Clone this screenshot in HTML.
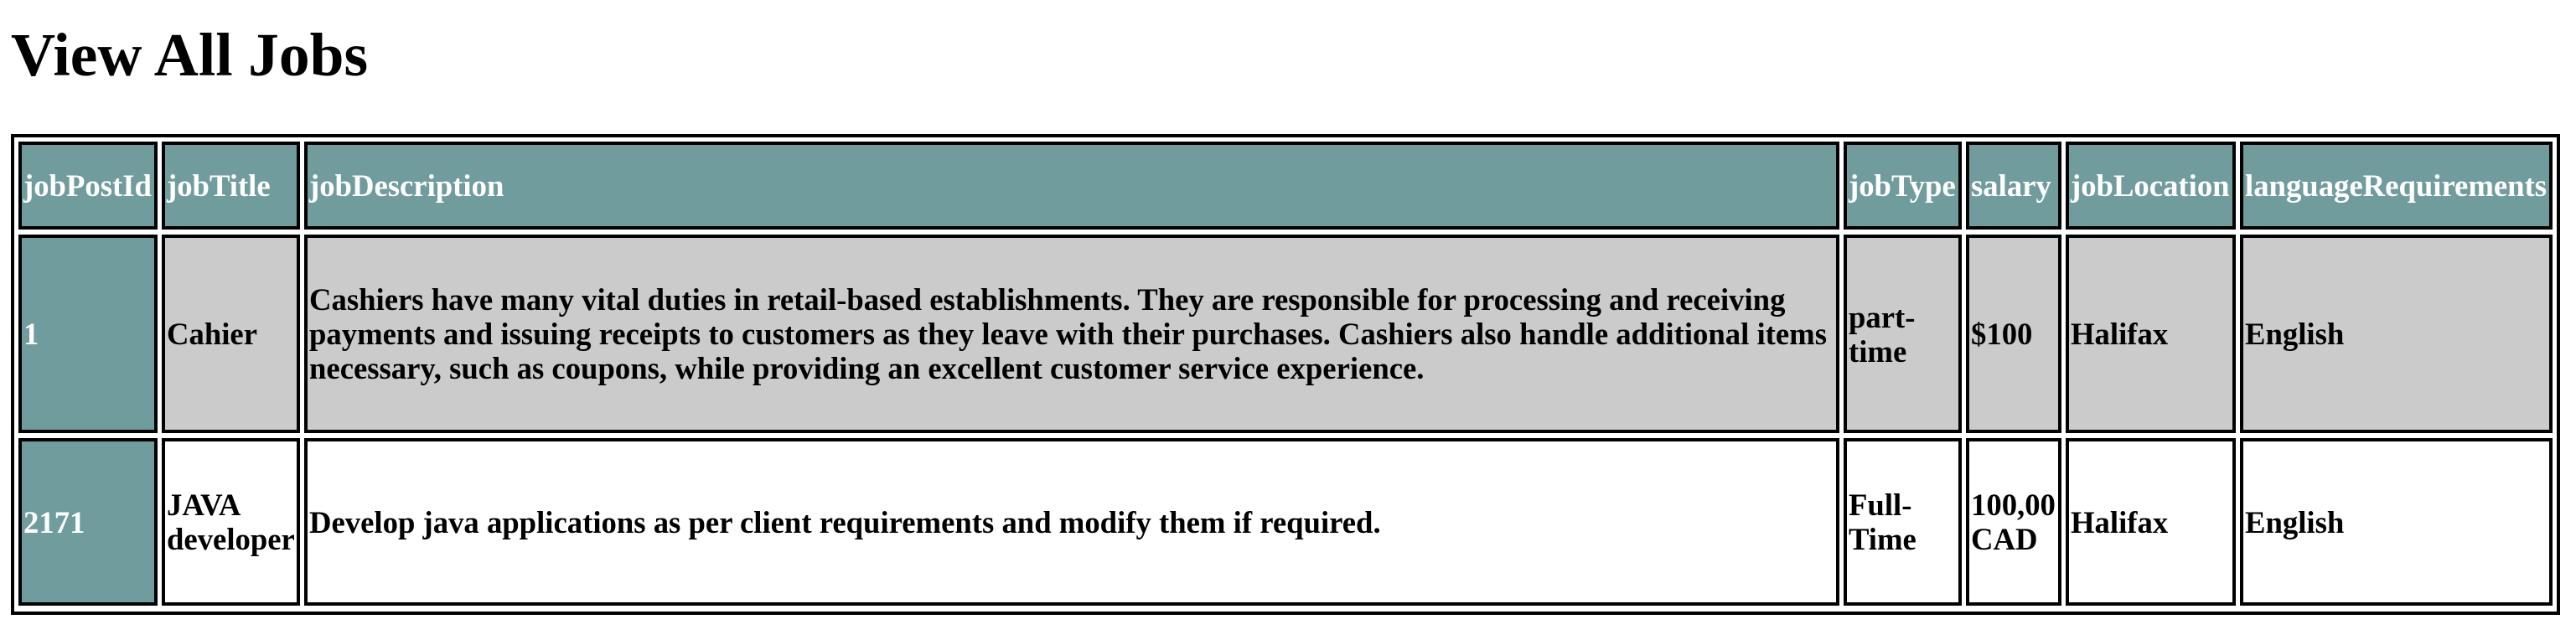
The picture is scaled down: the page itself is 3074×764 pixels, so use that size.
<!DOCTYPE html>
<html><head><meta charset="utf-8"><style>
html,body{margin:0;padding:0;background:#fff;width:3074px;height:764px;overflow:hidden;}
body{font-family:"Liberation Serif","Times New Roman",serif;font-weight:bold;position:relative;}
h1{position:absolute;left:13px;top:16px;margin:0;font-size:73.5px;line-height:100px;font-weight:bold;color:#000;}
.outer{position:absolute;left:13px;top:160px;width:3042px;height:574px;box-sizing:border-box;border:4px solid #000;}
.c{position:absolute;box-sizing:border-box;border:4px solid #000;display:flex;align-items:center;padding:0 2px;font-size:36.7px;line-height:41px;color:#000;white-space:nowrap;overflow:visible;}
.h,.t{background:#709c9e;color:#fff;}
.g{background:#cbcbcb;}
.w{background:#fff;}
</style></head><body>
<h1>View All Jobs</h1>
<div class="outer"></div>

<div class="c h" style="left:22px;top:169px;width:166px;height:105px">jobPostId</div>
<div class="c h" style="left:193px;top:169px;width:165px;height:105px">jobTitle</div>
<div class="c h" style="left:363px;top:169px;width:1832px;height:105px">jobDescription</div>
<div class="c h" style="left:2200px;top:169px;width:141px;height:105px">jobType</div>
<div class="c h" style="left:2346px;top:169px;width:114px;height:105px">salary</div>
<div class="c h" style="left:2465px;top:169px;width:203px;height:105px">jobLocation</div>
<div class="c h" style="left:2673px;top:169px;width:373px;height:105px">languageRequirements</div>

<div class="c t" style="left:22px;top:280px;width:166px;height:237px">1</div>
<div class="c g" style="left:193px;top:280px;width:165px;height:237px">Cahier</div>
<div class="c g" style="left:363px;top:280px;width:1832px;height:237px"><div>Cashiers have many vital duties in retail-based establishments. They are responsible for processing and receiving<br>payments and issuing receipts to customers as they leave with their purchases. Cashiers also handle additional items<br>necessary, such as coupons, while providing an excellent customer service experience.</div></div>
<div class="c g" style="left:2200px;top:280px;width:141px;height:237px"><div>part-<br>time</div></div>
<div class="c g" style="left:2346px;top:280px;width:114px;height:237px">$100</div>
<div class="c g" style="left:2465px;top:280px;width:203px;height:237px">Halifax</div>
<div class="c g" style="left:2673px;top:280px;width:373px;height:237px">English</div>

<div class="c t" style="left:22px;top:523px;width:166px;height:200px">2171</div>
<div class="c w" style="left:193px;top:523px;width:165px;height:200px"><div>JAVA<br>developer</div></div>
<div class="c w" style="left:363px;top:523px;width:1832px;height:200px">Develop java applications as per client requirements and modify them if required.</div>
<div class="c w" style="left:2200px;top:523px;width:141px;height:200px"><div>Full-<br>Time</div></div>
<div class="c w" style="left:2346px;top:523px;width:114px;height:200px"><div>100,00<br>CAD</div></div>
<div class="c w" style="left:2465px;top:523px;width:203px;height:200px">Halifax</div>
<div class="c w" style="left:2673px;top:523px;width:373px;height:200px">English</div>
</body></html>
